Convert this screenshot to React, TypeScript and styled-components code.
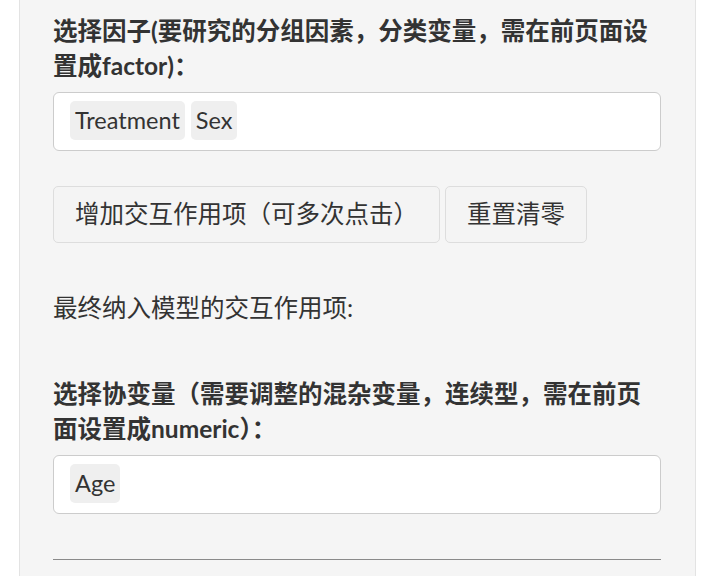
import React from 'react';
import styled, { createGlobalStyle } from 'styled-components';

const GlobalStyle = createGlobalStyle`
  html, body {
    margin: 0;
    padding: 0;
    background: #ffffff;
  }
  body {
    font-family: "Lato", "Noto Sans CJK SC", sans-serif;
    color: #333333;
  }
`;

const Page = styled.div`
  width: 712px;
  height: 576px;
  overflow: hidden;
  padding: 0 16px 0 19px;
  box-sizing: border-box;
`;

const Well = styled.div`
  background: #f5f5f5;
  border: 1px solid #e3e3e3;
  border-top: none;
  border-bottom: none;
  padding: 13px 34px 40px 33px;
  min-height: 576px;
  box-sizing: border-box;
`;

const FormGroup = styled.div<{ $after: number }>`
  margin-bottom: ${(p) => p.$after}px;
`;

const Label = styled.label`
  display: block;
  font-size: 24.5px;
  line-height: 35px;
  font-weight: 700;
  color: #333333;
  margin-bottom: 9px;
`;

const SelectBox = styled.div`
  display: flex;
  flex-wrap: wrap;
  gap: 6px;
  background: #ffffff;
  border: 1px solid #cccccc;
  border-radius: 6px;
  padding: 8px 16px 10px 16px;
`;

const Item = styled.span`
  display: inline-block;
  background: #efefef;
  border-radius: 5px;
  padding: 2px 5px 3px;
  font-size: 23.5px;
  line-height: 34px;
  color: #333333;
`;

const ButtonRow = styled.div`
  display: flex;
  gap: 5px;
  margin-bottom: 47px;
`;

const Button = styled.button`
  font-family: inherit;
  font-size: 24.5px;
  line-height: 34px;
  color: #333333;
  background: #f4f4f4;
  border: 1px solid #dddddd;
  border-radius: 5px;
  padding: 10px 21px 11px;
  cursor: pointer;
`;

const Note = styled.p`
  margin: 0 0 51px 0;
  font-size: 24.5px;
  line-height: 35px;
  color: #333333;
`;

const Rule = styled.hr`
  border: none;
  border-top: 1px solid #8a8a8a;
  margin: 0;
`;

export default function App() {
  return (
    <>
      <GlobalStyle />
      <Page>
        <Well>
          <FormGroup $after={35}>
            <Label>选择因子(要研究的分组因素，分类变量，需在前页面设置成factor)：</Label>
            <SelectBox>
              <Item>Treatment</Item>
              <Item>Sex</Item>
            </SelectBox>
          </FormGroup>
          <ButtonRow>
            <Button>增加交互作用项（可多次点击）</Button>
            <Button>重置清零</Button>
          </ButtonRow>
          <Note>最终纳入模型的交互作用项:</Note>
          <FormGroup $after={45}>
            <Label>选择协变量（需要调整的混杂变量，连续型，需在前页面设置成numeric）：</Label>
            <SelectBox>
              <Item>Age</Item>
            </SelectBox>
          </FormGroup>
          <Rule />
        </Well>
      </Page>
    </>
  );
}
